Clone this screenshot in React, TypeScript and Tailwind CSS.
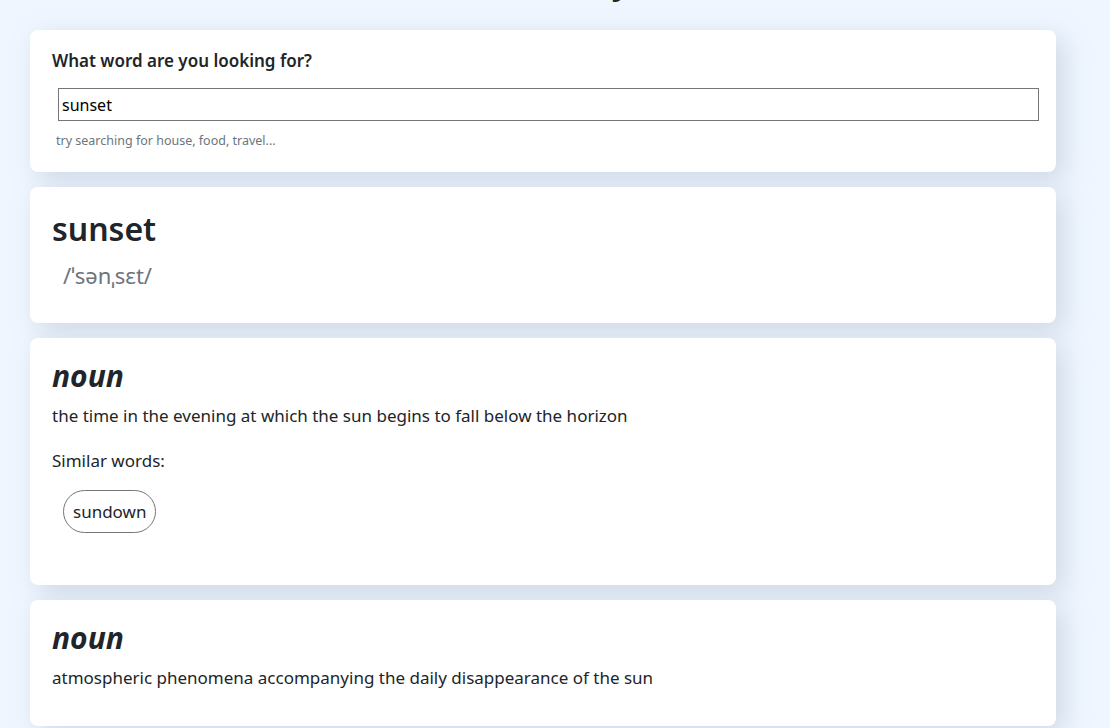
const definitions = [
  {
    pos: 'noun',
    text: 'the time in the evening at which the sun begins to fall below the horizon',
    synonyms: ['sundown'],
  },
  {
    pos: 'noun',
    text: 'atmospheric phenomena accompanying the daily disappearance of the sun',
    synonyms: [] as string[],
  },
];

const card = 'rounded-lg bg-white px-[22px] shadow-[8px_8px_26px_rgba(148,163,184,0.35)]';

export default function App() {
  return (
    <div className="min-h-screen overflow-hidden bg-[#eff6ff] font-['Noto_Sans',sans-serif] text-[#212529]">
      {/* page is scrolled: only the tail of the title peeks in */}
      <h1 className="-mt-[39px] mb-[28px] ml-[36px] h-[41px] w-[1026px] text-center text-[32px] font-semibold leading-[41px]">
        Dictionary
      </h1>

      <div className="ml-[30px] flex w-[1026px] flex-col gap-[15px] pb-[20px]">
        <section className={`${card} pb-[22px] pt-[19px]`}>
          <h2 className="text-[17px] font-semibold leading-[24px]">What word are you looking for?</h2>
          <input
            type="text"
            defaultValue="sunset"
            className="ml-[6px] mt-[15px] block h-[33px] w-[981px] border border-[#767676] px-[3px] text-base text-black outline-none"
          />
          <p className="ml-[4px] mt-[11px] text-[12.5px] leading-[18px] text-[#6c757d]">
            try searching for house, food, travel...
          </p>
        </section>

        <section className={`${card} pb-[33px] pt-[20px]`}>
          <h2 className="text-[32px] font-semibold leading-[44px]">sunset</h2>
          <p className="ml-[11px] mt-[9px] text-[22px] leading-[30px] text-[#6c757d]">/ˈsənˌsɛt/</p>
        </section>

        {definitions.map((d, i) => (
          <section
            key={i}
            className={`${card} pt-[20px] ${d.synonyms.length > 0 ? 'pb-[24px]' : 'pb-[35px]'}`}
          >
            <h3 className="text-[30px] font-bold italic leading-[36px]">{d.pos}</h3>
            <p className="mt-[9px] text-[17px] leading-[26px]">{d.text}</p>
            {d.synonyms.length > 0 && (
              <>
                <p className="mt-[19px] text-[17px] leading-[26px]">Similar words:</p>
                <div className="mb-[28px] ml-[11px] mt-[16px] flex gap-2">
                  {d.synonyms.map((s) => (
                    <span
                      key={s}
                      className="rounded-full border border-[#767676] px-[9px] py-[8px] text-[17px] leading-[25px]"
                    >
                      {s}
                    </span>
                  ))}
                </div>
              </>
            )}
          </section>
        ))}
      </div>
    </div>
  );
}
